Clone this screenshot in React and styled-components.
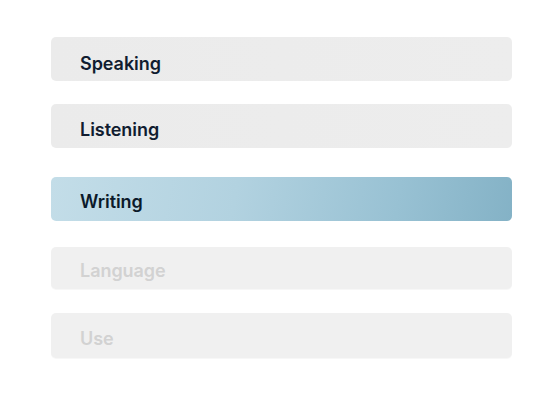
import React from "react";
import styled, { createGlobalStyle, css } from "styled-components";

const Global = createGlobalStyle`
  html, body { margin: 0; padding: 0; background: #ffffff; }
  body { font-family: Inter, "Noto Sans", sans-serif; }
`;

const Page = styled.div`
  width: 540px;
  height: 420px;
  box-sizing: border-box;
  padding: 37px 28px 0 51px;
  background: #ffffff;
`;

const List = styled.ul`
  list-style: none;
  margin: 0;
  padding: 0;
  display: flex;
  flex-direction: column;
  width: 461px;
`;

const Item = styled.li`
  box-sizing: border-box;
  height: ${(p) => p.$h || 44}px;
  margin-top: ${(p) => p.$space || 0}px;
  border-radius: 5px;
  display: flex;
  align-items: center;
  padding: ${(p) => p.$drop || 6}px 0 0 29px;
  font-size: 18px;
  font-weight: 600;
  letter-spacing: -0.05px;
  color: #101c30;
  background: linear-gradient(90deg, #ebebeb 0%, #ededed 100%);
  ${(p) =>
    p.$active &&
    css`
      background: linear-gradient(100deg, #c3dde8 0%, #b2d2e0 40%, #98c1d3 75%, #84b2c6 100%);
      color: #0b1a2a;
    `}
  ${(p) =>
    p.$disabled &&
    css`
      background: #f0f0f0;
      color: #d2d2d2;
      box-shadow: 0 1px 0 rgba(0, 0, 0, 0.03);
    `}
`;

const items = [
  { label: "Speaking", space: 0, drop: 8 },
  { label: "Listening", space: 23, drop: 6 },
  { label: "Writing", space: 29, active: true, drop: 4 },
  { label: "Language", space: 26, disabled: true, h: 42, drop: 5 },
  { label: "Use", space: 24, disabled: true, h: 45, drop: 6 },
];

export default function App() {
  return (
    <>
      <Global />
      <Page>
        <List>
          {items.map((it) => (
            <Item
              key={it.label}
              $space={it.space}
              $active={it.active}
              $disabled={it.disabled}
              $h={it.h}
              $drop={it.drop}
            >
              {it.label}
            </Item>
          ))}
        </List>
      </Page>
    </>
  );
}
